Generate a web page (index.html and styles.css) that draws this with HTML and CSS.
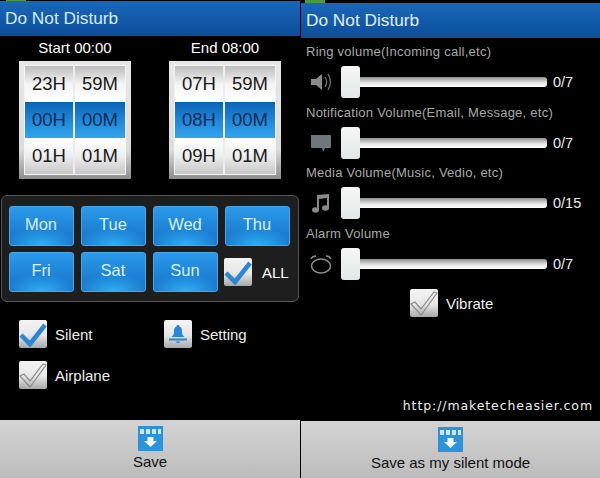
FILE: index.html
```html
<!DOCTYPE html>
<html lang="en">
<head>
    <meta charset="UTF-8">
    <meta name="viewport" content="width=device-width, initial-scale=1.0">
    <title>Do Not Disturb</title>
    <link rel="stylesheet" href="styles.css">
</head>
<body>

<svg class="defs" width="0" height="0">
    <symbol id="tick" viewBox="0 0 28 28">
        <path d="M2 15 L11 24 L26 5" fill="none" stroke="currentColor" stroke-width="4.500"/>
    </symbol>
    <symbol id="tick-off" viewBox="0 0 28 28">
        <path d="M1 15 L5 13 L11 20 L24 3 L27 4 L11 26 Z" fill="none" stroke="#8c8c8c" stroke-width="1.200"/>
    </symbol>
    <symbol id="save" viewBox="0 0 25 25">
        <rect width="25" height="25" fill="#2a93dd"/>
        <path d="M2 3h4v5H2zM8 3h4v5H8zM14 3h4v5h-4zM20 3h3v5h-3z" fill="#cfe6f7"/>
        <path d="M9.500 11h6v4h3.500l-6.500 6-6.500-6h3.500z" fill="#f2f8fc"/>
    </symbol>
</svg>

<!-- Left screen: schedule -->
<div class="screen screen-left">
    <div class="status"><span class="status-led"></span></div>
    <div class="title">Do Not Disturb</div>

    <div class="pickers">
        <div class="picker-col">
            <div class="picker-label">Start 00:00</div>
            <div class="picker">
                <div class="picker-grid">
                    <div class="cell cell-top">23H</div>
                    <div class="cell cell-top">59M</div>
                    <div class="cell cell-on">00H</div>
                    <div class="cell cell-on">00M</div>
                    <div class="cell cell-bottom">01H</div>
                    <div class="cell cell-bottom">01M</div>
                </div>
            </div>
        </div>
        <div class="picker-col">
            <div class="picker-label">End 08:00</div>
            <div class="picker">
                <div class="picker-grid">
                    <div class="cell cell-top">07H</div>
                    <div class="cell cell-top">59M</div>
                    <div class="cell cell-on">08H</div>
                    <div class="cell cell-on">00M</div>
                    <div class="cell cell-bottom">09H</div>
                    <div class="cell cell-bottom">01M</div>
                </div>
            </div>
        </div>
    </div>

    <div class="days">
        <div class="day">Mon</div>
        <div class="day">Tue</div>
        <div class="day">Wed</div>
        <div class="day">Thu</div>
        <div class="day">Fri</div>
        <div class="day">Sat</div>
        <div class="day">Sun</div>
        <div class="day-all">
            <span class="check"><svg class="check-mark"><use href="#tick"/></svg></span>
            <span>ALL</span>
        </div>
    </div>

    <div class="options">
        <div class="option">
            <span class="check"><svg class="check-mark"><use href="#tick"/></svg></span>
            <span>Silent</span>
        </div>
        <div class="option">
            <span class="check">
                <svg class="check-mark" viewBox="0 0 28 28">
                    <path d="M14 5c1 0 1.500 .500 1.500 1.500 2.500 1 2.500 3.500 2.500 5.500 0 2.500 1 3.500 2.500 5h-13c1.500-1.500 2.500-2.500 2.500-5 0-2 0-4.500 2.500-5.500 0-1 .500-1.500 1.500-1.500z" fill="#2a86d6"/>
                    <rect x="5" y="18.500" width="18" height="2" fill="#2a86d6"/>
                    <path d="M12 21.500h4c0 1-1 1.500-2 1.500s-2-.500-2-1.500z" fill="#2a86d6"/>
                </svg>
            </span>
            <span>Setting</span>
        </div>
        <div class="option">
            <span class="check"><svg class="check-mark"><use href="#tick-off"/></svg></span>
            <span>Airplane</span>
        </div>
    </div>

    <div class="save-bar">
        <svg class="save-icon"><use href="#save"/></svg>
        <span>Save</span>
    </div>
</div>

<!-- Right screen: volumes -->
<div class="screen screen-right">
    <div class="status status-right"><span class="status-led"></span></div>
    <div class="title">Do Not Disturb</div>

    <div class="volumes">
        <div class="vol-label">Ring volume(Incoming call,etc)</div>
        <div class="vol-row">
            <svg class="vol-icon" viewBox="0 0 22 22">
                <path d="M1 8h5l6-5v16l-6-5H1z" fill="#8a8a8a"/>
                <path d="M15 6c2 3 2 7 0 10M18 3c3 5 3 11 0 16" fill="none" stroke="#7a7a7a" stroke-width="1.200"/>
            </svg>
            <div class="slider"><span class="knob"></span><span class="track"></span></div>
            <span class="vol-value">0/7</span>
        </div>

        <div class="vol-label">Notification Volume(Email, Message, etc)</div>
        <div class="vol-row">
            <svg class="vol-icon" viewBox="0 0 22 22">
                <path d="M2 3h18a1 1 0 0 1 1 1v11a1 1 0 0 1-1 1h-5l-2 4-1-4H2a1 1 0 0 1-1-1V4a1 1 0 0 1 1-1z" fill="#6f767c"/>
            </svg>
            <div class="slider"><span class="knob"></span><span class="track"></span></div>
            <span class="vol-value">0/7</span>
        </div>

        <div class="vol-label">Media Volume(Music, Vedio, etc)</div>
        <div class="vol-row">
            <svg class="vol-icon" viewBox="0 0 22 22">
                <path d="M7 3l12-1v14h-2V6L9 7v11H7z" fill="#8a8a8a"/>
                <ellipse cx="5.500" cy="18" rx="3.500" ry="2.800" fill="#8a8a8a"/>
                <ellipse cx="15.500" cy="16" rx="3.500" ry="2.800" fill="#8a8a8a"/>
            </svg>
            <div class="slider"><span class="knob"></span><span class="track"></span></div>
            <span class="vol-value">0/15</span>
        </div>

        <div class="vol-label">Alarm Volume</div>
        <div class="vol-row">
            <svg class="vol-icon" viewBox="0 0 22 22">
                <ellipse cx="11" cy="13" rx="9.500" ry="7" fill="none" stroke="#8a8a8a" stroke-width="1.500"/>
                <path d="M1 6c1-2 3-3 5-3M21 6c-1-2-3-3-5-3" fill="none" stroke="#8a8a8a" stroke-width="1.500"/>
            </svg>
            <div class="slider"><span class="knob"></span><span class="track"></span></div>
            <span class="vol-value">0/7</span>
        </div>
    </div>

    <div class="vibrate">
        <span class="check"><svg class="check-mark"><use href="#tick-off"/></svg></span>
        <span>Vibrate</span>
    </div>

    <div class="watermark">http://maketecheasier.com</div>

    <div class="save-bar">
        <svg class="save-icon"><use href="#save"/></svg>
        <span>Save as my silent mode</span>
    </div>
</div>

</body>
</html>
```

FILE: styles.css
```css
html, body {
    margin: 0;
    padding: 0;
}
body {
    display: flex;
    width: 600px;
    height: 478px;
    overflow: hidden;
    background-color: #000;
    font-family: "Liberation Sans", Arial, sans-serif;
    color: #fff;
}
.defs {
    display: none;
}
.screen {
    display: flex;
    flex-direction: column;
    height: 478px;
    box-sizing: border-box;
}
.screen-left {
    width: 300px;
}
.screen-right {
    width: 300px;
}

/* top strip */
.status {
    height: 1px;
    padding-left: 6px;
}
.status-right {
    height: 3px;
    padding-left: 5px;
}
.status-led {
    display: block;
    width: 20px;
    height: 100%;
    background-color: #4d9a3a;
}
.title {
    height: 35px;
    line-height: 35px;
    padding-left: 5px;
    font-size: 17.250px;
    color: #d8ecfb;
    background: linear-gradient(to bottom, #1a68b8, #0b4d9b);
}
.screen-right .title {
    margin-left: 1px;
    padding-left: 5px;
    color: #e3f1fc;
}

/* time pickers */
.pickers {
    display: flex;
    gap: 38px;
    padding: 3px 0 0 19px;
}
.picker-col {
    width: 112px;
}
.picker-label {
    height: 22px;
    line-height: 17px;
    text-align: center;
    font-size: 15px;
}
.picker {
    height: 118px;
    box-sizing: border-box;
    padding: 5px 6px;
    background: linear-gradient(to bottom, #e8e8e8, #dcdcdc 75%, #8d8d8d);
}
.picker-grid {
    display: grid;
    grid-template-columns: 48px 50px;
    grid-template-rows: 36px 36px 36px;
    column-gap: 2px;
    font-size: 18.500px;
    color: #1a1a1a;
    background-color: #ececec;
    outline: 1px solid #f4f4f4;
}
.cell {
    display: flex;
    align-items: center;
    justify-content: center;
}
.cell-top {
    background: linear-gradient(to bottom, #bcbcbc, #f4f4f4 50%, #fff);
}
.cell-on {
    color: #0b2d55;
    background: linear-gradient(to bottom, #0c63b6, #1f86d8 50%, #31a4ee);
}
.cell-bottom {
    background: linear-gradient(to bottom, #fff, #eee 50%, #c6c6c6);
}

/* day buttons */
.days {
    display: grid;
    grid-template-columns: repeat(4, 65px);
    grid-template-rows: 40px 40px;
    gap: 6px 7px;
    margin: 16px 0 0 1px;
    width: 298px;
    height: 107px;
    box-sizing: border-box;
    padding: 10px 0 0 7px;
    background-color: #1e1e1e;
    border: 1px solid #555;
    border-radius: 6px;
}
.day {
    display: flex;
    align-items: center;
    justify-content: center;
    padding: 0 1px 4px 0;
    font-size: 16.500px;
    color: #d9f0ff;
    background: radial-gradient(ellipse 60% 45% at 50% 100%, #2fb0f3, transparent), linear-gradient(to bottom, #2b9aea, #1471c8);
    border: 1px solid #4aa6e4;
    box-sizing: border-box;
    border-radius: 3px;
}
.day-all {
    display: flex;
    align-items: center;
    gap: 10px;
    margin-left: -1px;
    font-size: 15px;
}
.check {
    display: block;
    flex: none;
    width: 28px;
    height: 28px;
    border-radius: 2px;
    color: #2a86d6;
    background: linear-gradient(to bottom, #f4f4f4, #e6e6e6 55%, #a8a8a8);
}
.check-mark {
    display: block;
    width: 28px;
    height: 28px;
}

/* silent, setting, airplane */
.options {
    display: grid;
    grid-template-columns: 145px 1fr;
    grid-auto-rows: 28px;
    row-gap: 13px;
    margin: 18px 0 0 19px;
    font-size: 15px;
    color: #eee;
}
.option {
    display: flex;
    align-items: center;
    gap: 8px;
}

/* bottom bar */
.save-bar {
    display: flex;
    flex-direction: column;
    align-items: center;
    margin-top: auto;
    height: 58px;
    box-sizing: border-box;
    padding-top: 6px;
    font-size: 15px;
    color: #111;
    background: linear-gradient(to bottom, #d4d4d4, #bcbcbc);
}
.screen-right .save-bar {
    margin-top: 0;
    margin-left: 1px;
    height: 57px;
}
.save-icon {
    display: block;
    width: 25px;
    height: 25px;
    margin-bottom: 2px;
}

/* volume rows */
.volumes {
    padding: 6px 0 0 6px;
}
.vol-label {
    height: 16px;
    line-height: 16px;
    font-size: 13px;
    letter-spacing: 0.25px;
    color: #a8a8a8;
}
.vol-row {
    display: flex;
    align-items: center;
    height: 32px;
    margin: 6px 0 6.500px;
}
.vol-icon {
    width: 22px;
    height: 22px;
    margin-left: 4px;
}
.slider {
    display: flex;
    align-items: center;
    margin-left: 9px;
    width: 206px;
}
.knob {
    flex: none;
    width: 19px;
    height: 32px;
    border-radius: 3px;
    background: linear-gradient(to bottom, #f6f6f6, #e4e8e8);
}
.track {
    flex: 1;
    height: 10px;
    border-radius: 0 3px 3px 0;
    background: linear-gradient(to bottom, #8f8f8f, #e8e8e8 60%, #fff);
}
.vol-value {
    margin-left: 6px;
    font-size: 14.500px;
    color: #eee;
}
.vibrate {
    display: flex;
    align-items: center;
    gap: 8px;
    margin: 3px 0 0 110px;
    font-size: 15px;
    color: #eee;
}
.watermark {
    margin-top: auto;
    padding: 3px 7px 0 0;
    height: 23px;
    text-align: right;
    font-family: "DejaVu Sans", sans-serif;
    font-size: 12.500px;
    letter-spacing: 0.900px;
    color: #eee;
}
```
